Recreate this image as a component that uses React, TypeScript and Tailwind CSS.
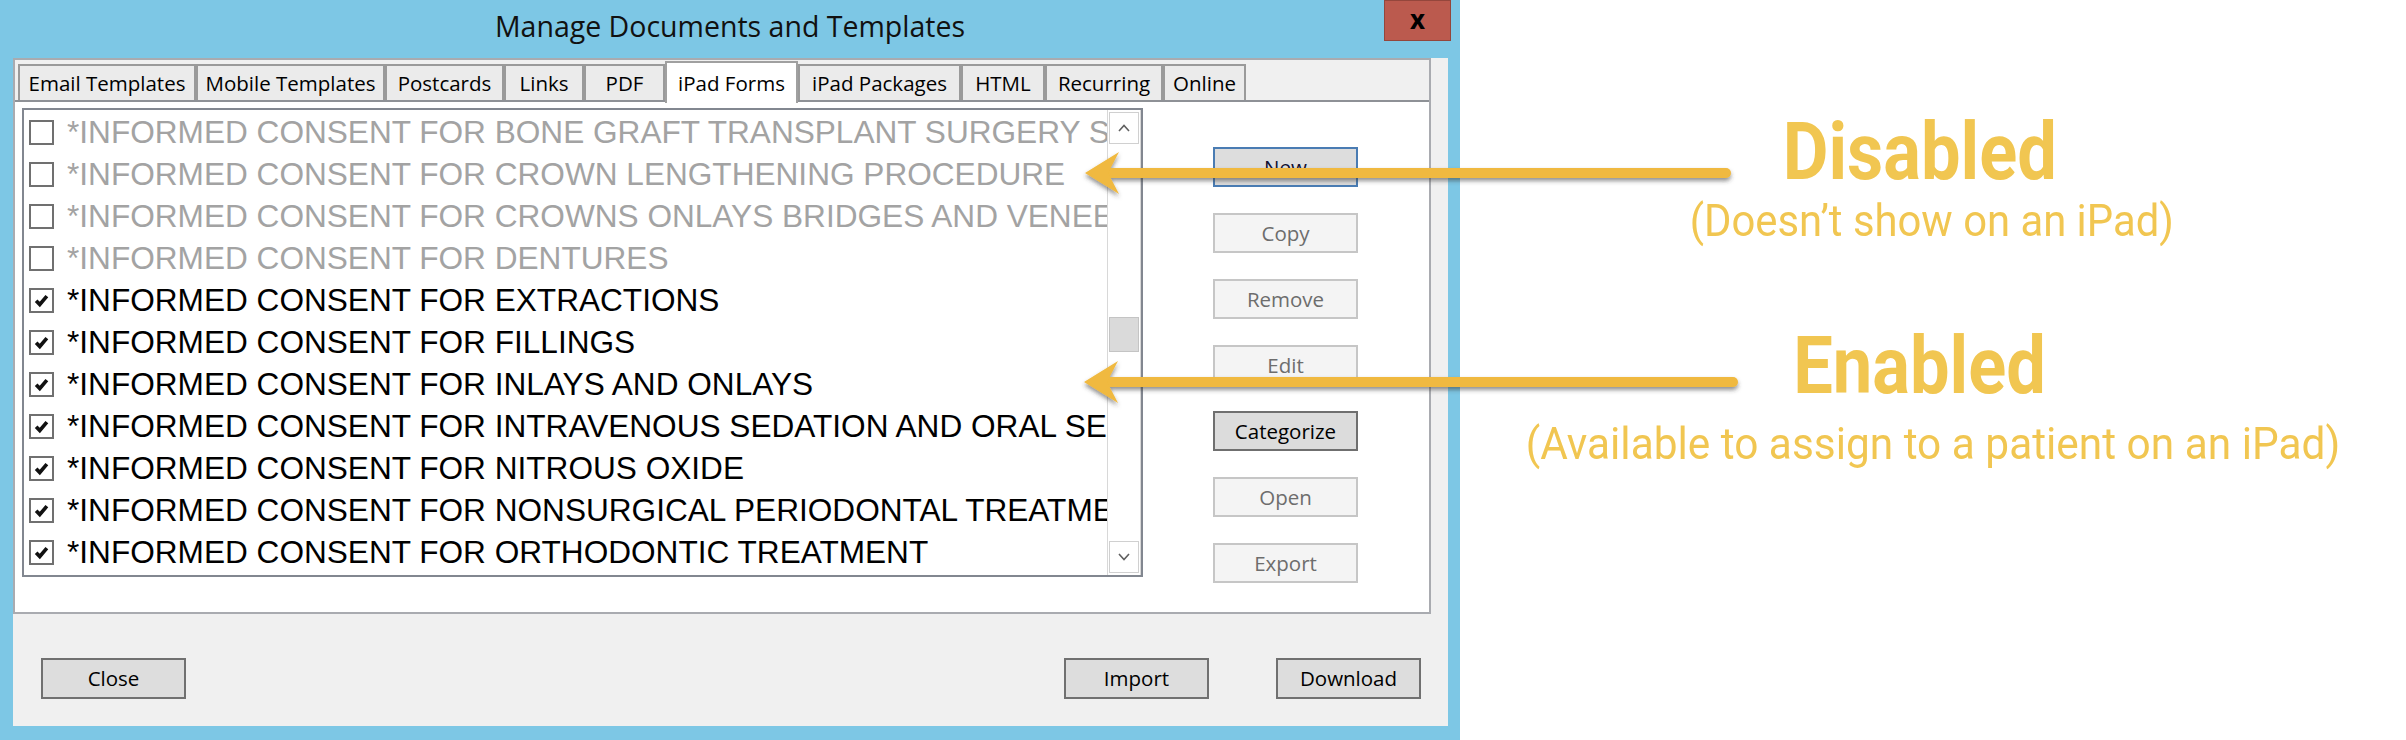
import React from 'react';

type Row = { label: string; enabled: boolean };

const rows: Row[] = [
  { label: '*INFORMED CONSENT FOR BONE GRAFT TRANSPLANT SURGERY SITES', enabled: false },
  { label: '*INFORMED CONSENT FOR CROWN LENGTHENING PROCEDURE', enabled: false },
  { label: '*INFORMED CONSENT FOR CROWNS ONLAYS BRIDGES AND VENEERS', enabled: false },
  { label: '*INFORMED CONSENT FOR DENTURES', enabled: false },
  { label: '*INFORMED CONSENT FOR EXTRACTIONS', enabled: true },
  { label: '*INFORMED CONSENT FOR FILLINGS', enabled: true },
  { label: '*INFORMED CONSENT FOR INLAYS AND ONLAYS', enabled: true },
  { label: '*INFORMED CONSENT FOR INTRAVENOUS SEDATION AND ORAL SEDATION', enabled: true },
  { label: '*INFORMED CONSENT FOR NITROUS OXIDE', enabled: true },
  { label: '*INFORMED CONSENT FOR NONSURGICAL PERIODONTAL TREATMENT', enabled: true },
  { label: '*INFORMED CONSENT FOR ORTHODONTIC TREATMENT', enabled: true },
];

const tabs = [
  { name: 'Email Templates', w: 'w-[178px]' },
  { name: 'Mobile Templates', w: 'w-[189px]' },
  { name: 'Postcards', w: 'w-[119px]' },
  { name: 'Links', w: 'w-[80px]' },
  { name: 'PDF', w: 'w-[81px]' },
  { name: 'iPad Forms', w: 'w-[133px]', active: true },
  { name: 'iPad Packages', w: 'w-[163px]' },
  { name: 'HTML', w: 'w-[84px]' },
  { name: 'Recurring', w: 'w-[118px]' },
  { name: 'Online', w: 'w-[83px]' },
];

const sideButtons = [
  { label: 'New', kind: 'default' },
  { label: 'Copy', kind: 'disabled' },
  { label: 'Remove', kind: 'disabled' },
  { label: 'Edit', kind: 'disabled' },
  { label: 'Categorize', kind: 'normal' },
  { label: 'Open', kind: 'disabled' },
  { label: 'Export', kind: 'disabled' },
];

const ui = "font-['Open_Sans','Segoe_UI',sans-serif]";

const CheckBox = ({ checked }: { checked: boolean }) => (
  <div className="w-[25px] h-[25px] shrink-0 border-2 border-[#707070] bg-white flex items-center justify-center">
    {checked && (
      <svg width="17" height="17" viewBox="0 0 13 13">
        <path d="M2.4 6.6 L5.2 9.6 L10.6 3.2" fill="none" stroke="#111" strokeWidth="2.8" />
      </svg>
    )}
  </div>
);

const Chevron = ({ up }: { up?: boolean }) => (
  <svg width="14" height="10" viewBox="0 0 14 10">
    <path d={up ? 'M2 8 L7 2.5 L12 8' : 'M2 2 L7 7.5 L12 2'} fill="none" stroke="#606060" strokeWidth="1.6" />
  </svg>
);

const SideButton = ({ label, kind }: { label: string; kind: string }) => {
  const cls =
    kind === 'default'
      ? 'bg-[#dddddd] border-[#4a7cb3] text-[#101030]'
      : kind === 'normal'
      ? 'bg-[#dcdcdc] border-[#6f6f6f] text-black'
      : 'bg-[#f4f4f4] border-[#c6c6c6] text-[#6d6d6d]';
  return (
    <div className={`w-[145px] h-[40px] border-2 flex items-center justify-center text-[20.5px] ${cls}`}>{label}</div>
  );
};

const BottomButton = ({ label }: { label: string }) => (
  <div className="w-[145px] h-[41px] border-2 border-[#707070] bg-[#dddddd] flex items-center justify-center text-[20.5px] text-black">
    {label}
  </div>
);

const Arrows = () => (
  <svg className="absolute inset-0 pointer-events-none" width="2406" height="740">
    <defs>
      <filter id="sh" x="-5%" y="-50%" width="110%" height="200%">
        <feDropShadow dx="0" dy="3" stdDeviation="2.2" floodColor="#3a3a3a" floodOpacity="0.55" />
      </filter>
    </defs>
    <g filter="url(#sh)" fill="#f0b93f" stroke="none">
      <line x1="1106" y1="173" x2="1726" y2="173" stroke="#f0b93f" strokeWidth="10" strokeLinecap="round" />
      <path d="M1085 173 L1119 152 L1108 173 L1119 194 Z" />
      <line x1="1105" y1="382" x2="1733" y2="382" stroke="#f0b93f" strokeWidth="10" strokeLinecap="round" />
      <path d="M1084 382 L1118 361 L1107 382 L1118 403 Z" />
    </g>
  </svg>
);

export default function App() {
  return (
    <div className={`relative w-[2406px] h-[740px] bg-white flex overflow-hidden ${ui}`}>
      {/* dialog window */}
      <div className="w-[1460px] h-full shrink-0 bg-[#7dc7e5] flex flex-col">
        <div className="h-[58px] grid grid-cols-[1fr_auto_1fr]">
          <div />
          <div className="pt-[12px] text-[28.5px] leading-none text-[#111]">Manage Documents and Templates</div>
          <div className="flex justify-end pr-[9px]">
            <div className="w-[67px] h-[41px] bg-[#bb5a4e] border border-[#94463c] flex items-center justify-center pb-[4px] text-[26px] font-bold leading-none text-black">
              x
            </div>
          </div>
        </div>

        <div className="ml-[13px] mr-[12px] h-[668px] bg-[#f0f0f0] flex flex-col">
          {/* tab control */}
          <div className="w-[1418px] h-[556px] border-2 border-[#a9abb0] flex flex-col">
            <div className="h-[40px] flex items-end pl-[3px] relative z-10">
              {tabs.map(t =>
                t.active ? (
                  <div
                    key={t.name}
                    className={`${t.w} h-[42px] -mb-[3px] bg-white border-2 border-b-0 border-[#a0a0a0] flex justify-center pt-[5px] text-[20.5px] text-black`}
                  >
                    {t.name}
                  </div>
                ) : (
                  <div
                    key={t.name}
                    className={`${t.w} h-[36px] bg-[#ebebeb] border-2 border-b-0 border-[#9a9a9a] flex items-center justify-center text-[20.5px] text-black`}
                  >
                    {t.name}
                  </div>
                )
              )}
            </div>
            <div className="flex-1 bg-white border-t-2 border-[#8e9196] flex items-start pl-[7px] pt-[6px]">
              {/* list box */}
              <div className="w-[1121px] h-[469px] border-2 border-[#828790] flex font-['Liberation_Sans',Arial,sans-serif]">
                <div className="flex-1 overflow-hidden pt-[1px]">
                  {rows.map(r => (
                    <div key={r.label} className="h-[42px] flex items-center pl-[5px] gap-[13px] whitespace-nowrap">
                      <CheckBox checked={r.enabled} />
                      <span className={`text-[31.6px] leading-[42px] ${r.enabled ? 'text-black' : 'text-[#a3a3a3]'}`}>
                        {r.label}
                      </span>
                    </div>
                  ))}
                </div>
                <div className="w-[34px] shrink-0 border-x border-[#d8d8d8] bg-white flex flex-col py-[2px] px-[1px]">
                  <div className="h-[32px] border border-[#d0d0d0] flex items-center justify-center">
                    <Chevron up />
                  </div>
                  <div className="h-[35px] mt-[173px] bg-[#dadada] border border-[#c4c4c4]" />
                  <div className="flex-1" />
                  <div className="h-[32px] border border-[#d0d0d0] flex items-center justify-center">
                    <Chevron />
                  </div>
                </div>
              </div>
              {/* side buttons */}
              <div className="ml-[70px] mt-[39px] flex flex-col gap-[26px]">
                {sideButtons.map(b => (
                  <SideButton key={b.label} label={b.label} kind={b.kind} />
                ))}
              </div>
            </div>
          </div>

          {/* bottom buttons */}
          <div className="flex items-start pt-[44px] pl-[28px] pr-[27px]">
            <BottomButton label="Close" />
            <div className="flex-1" />
            <BottomButton label="Import" />
            <div className="w-[67px]" />
            <BottomButton label="Download" />
          </div>
        </div>
      </div>

      {/* annotations */}
      <div className="flex-1 flex flex-col items-center pt-[112px] pr-[26px] text-[#f1c651] font-['Roboto',sans-serif]">
        <div className="text-[80px] leading-none font-bold scale-x-[0.88]">Disabled</div>
        <div className="mt-[7px] ml-[24px] text-[44px] leading-none scale-x-[0.95]">(Doesn’t show on an iPad)</div>
        <div className="mt-[83px] text-[80px] leading-none font-bold scale-x-[0.88]">Enabled</div>
        <div className="mt-[16px] ml-[26px] text-[44px] leading-none scale-x-[0.963]">(Available to assign to a patient on an iPad)</div>
      </div>

      <Arrows />
    </div>
  );
}
